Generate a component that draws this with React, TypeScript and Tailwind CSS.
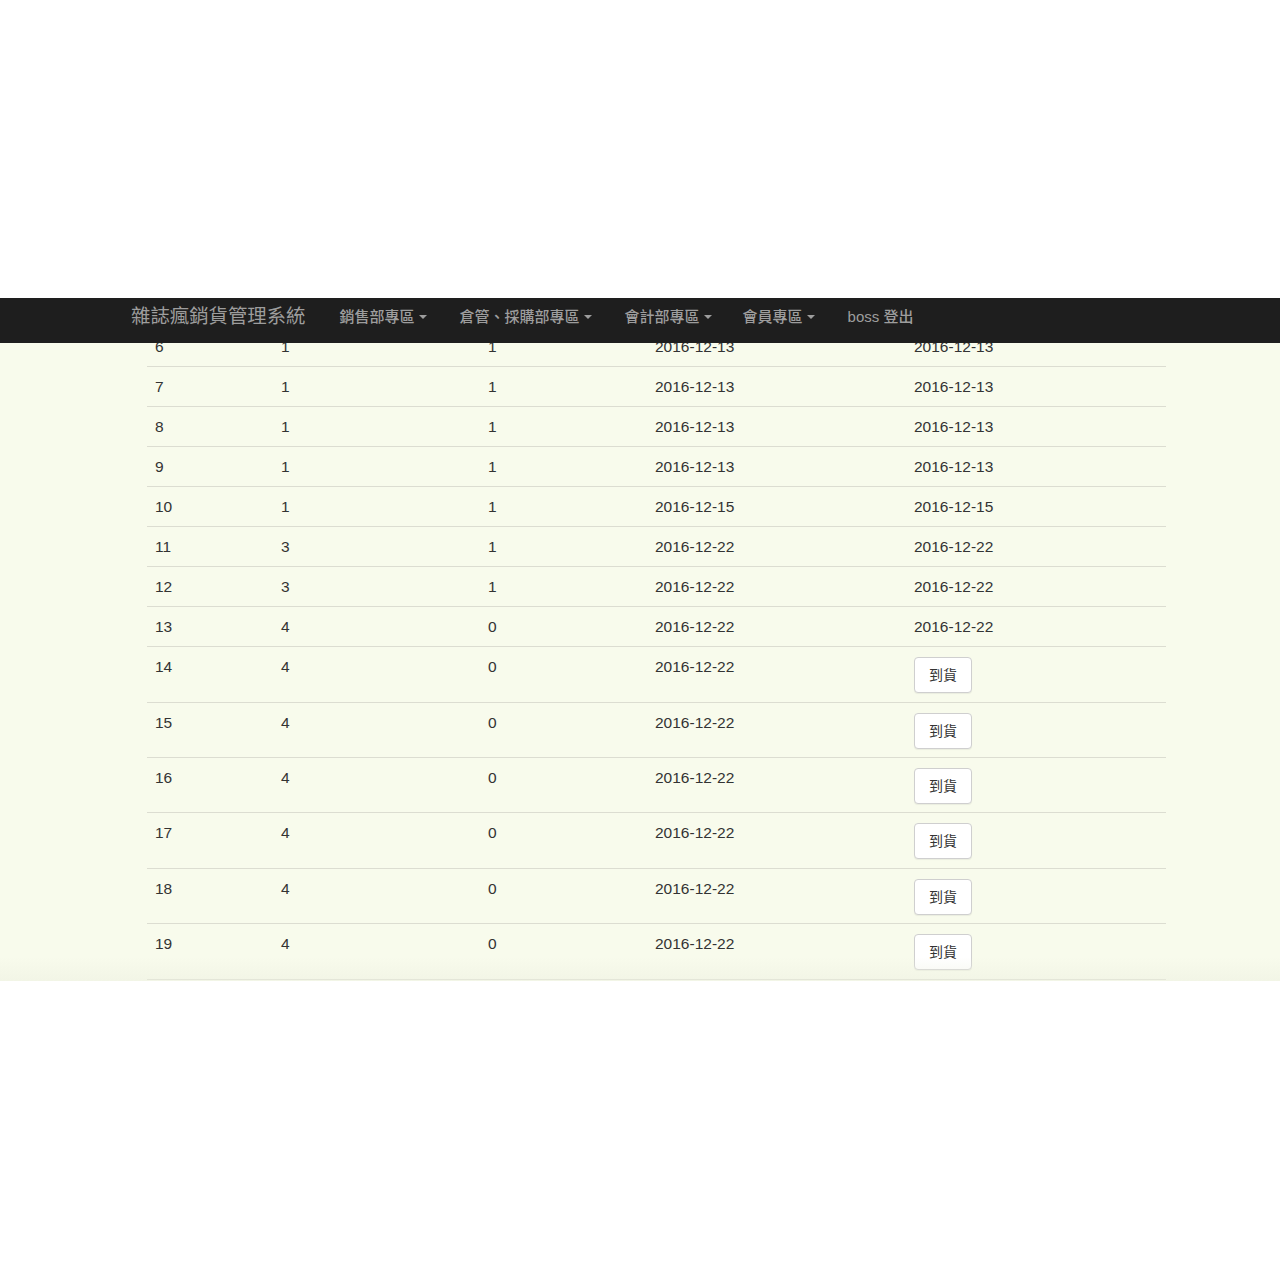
import React from "react";

const font = { fontFamily: '"Liberation Sans", "Noto Sans CJK TC", sans-serif' };

type Row = { id: number; a: number; b: number; d1: string; d2: string | null; h: string };

const rows: Row[] = [
  { id: 6, a: 1, b: 1, d1: "2016-12-13", d2: "2016-12-13", h: "h-[40px]" },
  { id: 7, a: 1, b: 1, d1: "2016-12-13", d2: "2016-12-13", h: "h-[40px]" },
  { id: 8, a: 1, b: 1, d1: "2016-12-13", d2: "2016-12-13", h: "h-[40px]" },
  { id: 9, a: 1, b: 1, d1: "2016-12-13", d2: "2016-12-13", h: "h-[40px]" },
  { id: 10, a: 1, b: 1, d1: "2016-12-15", d2: "2016-12-15", h: "h-[40px]" },
  { id: 11, a: 3, b: 1, d1: "2016-12-22", d2: "2016-12-22", h: "h-[40px]" },
  { id: 12, a: 3, b: 1, d1: "2016-12-22", d2: "2016-12-22", h: "h-[40px]" },
  { id: 13, a: 4, b: 0, d1: "2016-12-22", d2: "2016-12-22", h: "h-[40px]" },
  { id: 14, a: 4, b: 0, d1: "2016-12-22", d2: null, h: "h-[56px]" },
  { id: 15, a: 4, b: 0, d1: "2016-12-22", d2: null, h: "h-[55px]" },
  { id: 16, a: 4, b: 0, d1: "2016-12-22", d2: null, h: "h-[55px]" },
  { id: 17, a: 4, b: 0, d1: "2016-12-22", d2: null, h: "h-[56px]" },
  { id: 18, a: 4, b: 0, d1: "2016-12-22", d2: null, h: "h-[55px]" },
  { id: 19, a: 4, b: 0, d1: "2016-12-22", d2: null, h: "h-[56px]" },
];

const Caret = () => (
  <span className="inline-block w-0 h-0 ml-[4px] align-middle border-t-[4px] border-t-[#9d9d9d] border-x-[4px] border-x-transparent"></span>
);

const menu = [
  { label: "銷售部專區", caret: true, ml: "ml-0" },
  { label: "倉管、採購部專區", caret: true, ml: "ml-[33px]" },
  { label: "會計部專區", caret: true, ml: "ml-[33px]" },
  { label: "會員專區", caret: true, ml: "ml-[31px]" },
  { label: "boss 登出", caret: false, ml: "ml-[33px]" },
];

export default function App() {
  return (
    <div className="w-[1280px] h-[1280px] bg-white" style={font}>
      <div className="h-[298px]"></div>

      {/* navbar */}
      <nav className="h-[45px] bg-[#1e1e1e] flex items-center pl-[131px] pb-[7px]">
        <span className="text-[19.4px] text-[#9d9d9d] mr-[34px]">雜誌瘋銷貨管理系統</span>
        {menu.map((m) => (
          <span key={m.label} className={`${m.ml} text-[15px] font-medium text-[#9d9d9d] flex items-center`}>
            {m.label}
            {m.caret && <Caret />}
          </span>
        ))}
      </nav>

      {/* content */}
      <div className="relative h-[638px] overflow-hidden bg-[#f8fbec]">
        <div className="-mt-[17px] ml-[147px] w-[1019px] text-[15.5px] text-[#333]">
          {rows.map((r) => (
            <div
              key={r.id}
              className={`${r.h} grid grid-cols-[126px_207px_167px_259px_260px] border-t border-[#dcddd1]`}
            >
              <div className="pl-[8px] pt-[10px] leading-[20px]">{r.id}</div>
              <div className="pl-[8px] pt-[10px] leading-[20px]">{r.a}</div>
              <div className="pl-[8px] pt-[10px] leading-[20px]">{r.b}</div>
              <div className="pl-[8px] pt-[10px] leading-[20px]">{r.d1}</div>
              <div className="pl-[8px] pt-[10px] leading-[20px]">
                {r.d2 ? (
                  r.d2
                ) : (
                  <button className="w-[58px] h-[36px] bg-white border border-[#cfcfcf] rounded-[4px] text-[14px] text-[#333] shadow-[0_1px_1px_rgba(0,0,0,0.06)]">
                    到貨
                  </button>
                )}
              </div>
            </div>
          ))}
          <div className="border-t border-[#d6d7cb]"></div>
        </div>
        <div className="pointer-events-none absolute left-0 right-0 bottom-0 h-[24px] bg-gradient-to-b from-transparent to-[#eef1e2]/60"></div>
      </div>
    </div>
  );
}
